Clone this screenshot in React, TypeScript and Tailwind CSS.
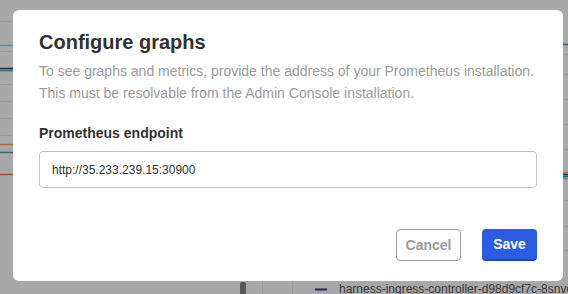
import { useState } from "react";

const LEFT_GRID = [21, 51, 84, 101, 118, 135, 169];
const LEFT_SERIES: [number, string][] = [
  [45, "#5a8ca3"],
  [68, "#1e2850"],
  [70, "#2b6c6e"],
  [144, "#b0683a"],
  [152, "#2a6b6c"],
  [174, "#a9452f"],
];
const RIGHT_GRID = [54, 74, 99, 124, 149, 200, 226, 250];
const RIGHT_SERIES: [number, string][] = [
  [44, "#2b6c6e"],
  [172, "#b0683a"],
  [174, "#1e2850"],
  [176, "#2b6c6e"],
  [178, "#5a8ca3"],
];

function ChartBackdrop() {
  return (
    <svg width="568" height="294" className="block">
      <rect width="568" height="294" fill="#a8a8a8" />
      {LEFT_GRID.map((y) => (
        <line key={`lg${y}`} x1="0" x2="13" y1={y + 0.5} y2={y + 0.5} stroke="#9d9d9d" />
      ))}
      {LEFT_SERIES.map(([y, c]) => (
        <line key={`ls${y}`} x1="0" x2="13" y1={y + 0.5} y2={y + 0.5} stroke={c} strokeWidth="1.5" />
      ))}
      {RIGHT_GRID.map((y) => (
        <line key={`rg${y}`} x1="563" x2="568" y1={y + 0.5} y2={y + 0.5} stroke="#9d9d9d" />
      ))}
      {RIGHT_SERIES.map(([y, c]) => (
        <line key={`rs${y}`} x1="563" x2="568" y1={y + 0.5} y2={y + 0.5} stroke={c} strokeWidth="1.5" />
      ))}
      <line x1="262.5" x2="262.5" y1="281" y2="294" stroke="#9f9f9f" />
      <line x1="292.5" x2="292.5" y1="281" y2="294" stroke="#9f9f9f" />
      <rect x="240" y="282" width="6" height="14" rx="2" fill="#585858" />
      <line x1="315" x2="327" y1="289.5" y2="289.5" stroke="#1e2850" strokeWidth="2" />
      <text
        x="339"
        y="293"
        fontSize="12"
        fill="#3a3a3a"
        fontFamily="'Liberation Sans', Arial, sans-serif"
      >
        harness-ingress-controller-d98d9cf7c-8snvq
      </text>
    </svg>
  );
}

export default function App() {
  const [endpoint, setEndpoint] = useState("http://35.233.239.15:30900");

  return (
    <div className="relative w-[568px] h-[294px] overflow-hidden font-['Liberation_Sans',Arial,sans-serif]">
      <ChartBackdrop />

      {/* Modal */}
      <div className="absolute left-[13px] top-[10px] w-[550px] h-[271px] bg-white rounded-[6px] px-[26px] pt-[20px] pb-[20px] flex flex-col">
        <h2 className="text-[20px] leading-[24px] font-bold text-[#323232]">Configure graphs</h2>
        <p className="mt-[6px] text-[14px] leading-[22px] text-[#9b9b9b]">
          To see graphs and metrics, provide the address of your Prometheus installation.
          <br />
          This must be resolvable from the Admin Console installation.
        </p>

        <label className="mt-[19px] text-[14px] leading-[20px] font-bold text-[#323232]">
          Prometheus endpoint
        </label>
        <input
          value={endpoint}
          onChange={(e) => setEndpoint(e.target.value)}
          className="mt-[8px] h-[37px] w-full border border-[#c4c4c4] rounded-[4px] px-[12px] text-[12px] text-[#323232] outline-none"
        />

        <div className="mt-auto flex justify-end gap-[21px]">
          <button className="h-[32px] w-[65px] rounded-[4px] border border-[#9b9b9b] bg-white text-[14px] font-bold text-[#9b9b9b]">
            Cancel
          </button>
          <button className="h-[32px] w-[55px] rounded-[4px] bg-[#2c5be4] border-b-2 border-[#1f47bd] text-[14px] font-bold text-white">
            Save
          </button>
        </div>
      </div>
    </div>
  );
}
